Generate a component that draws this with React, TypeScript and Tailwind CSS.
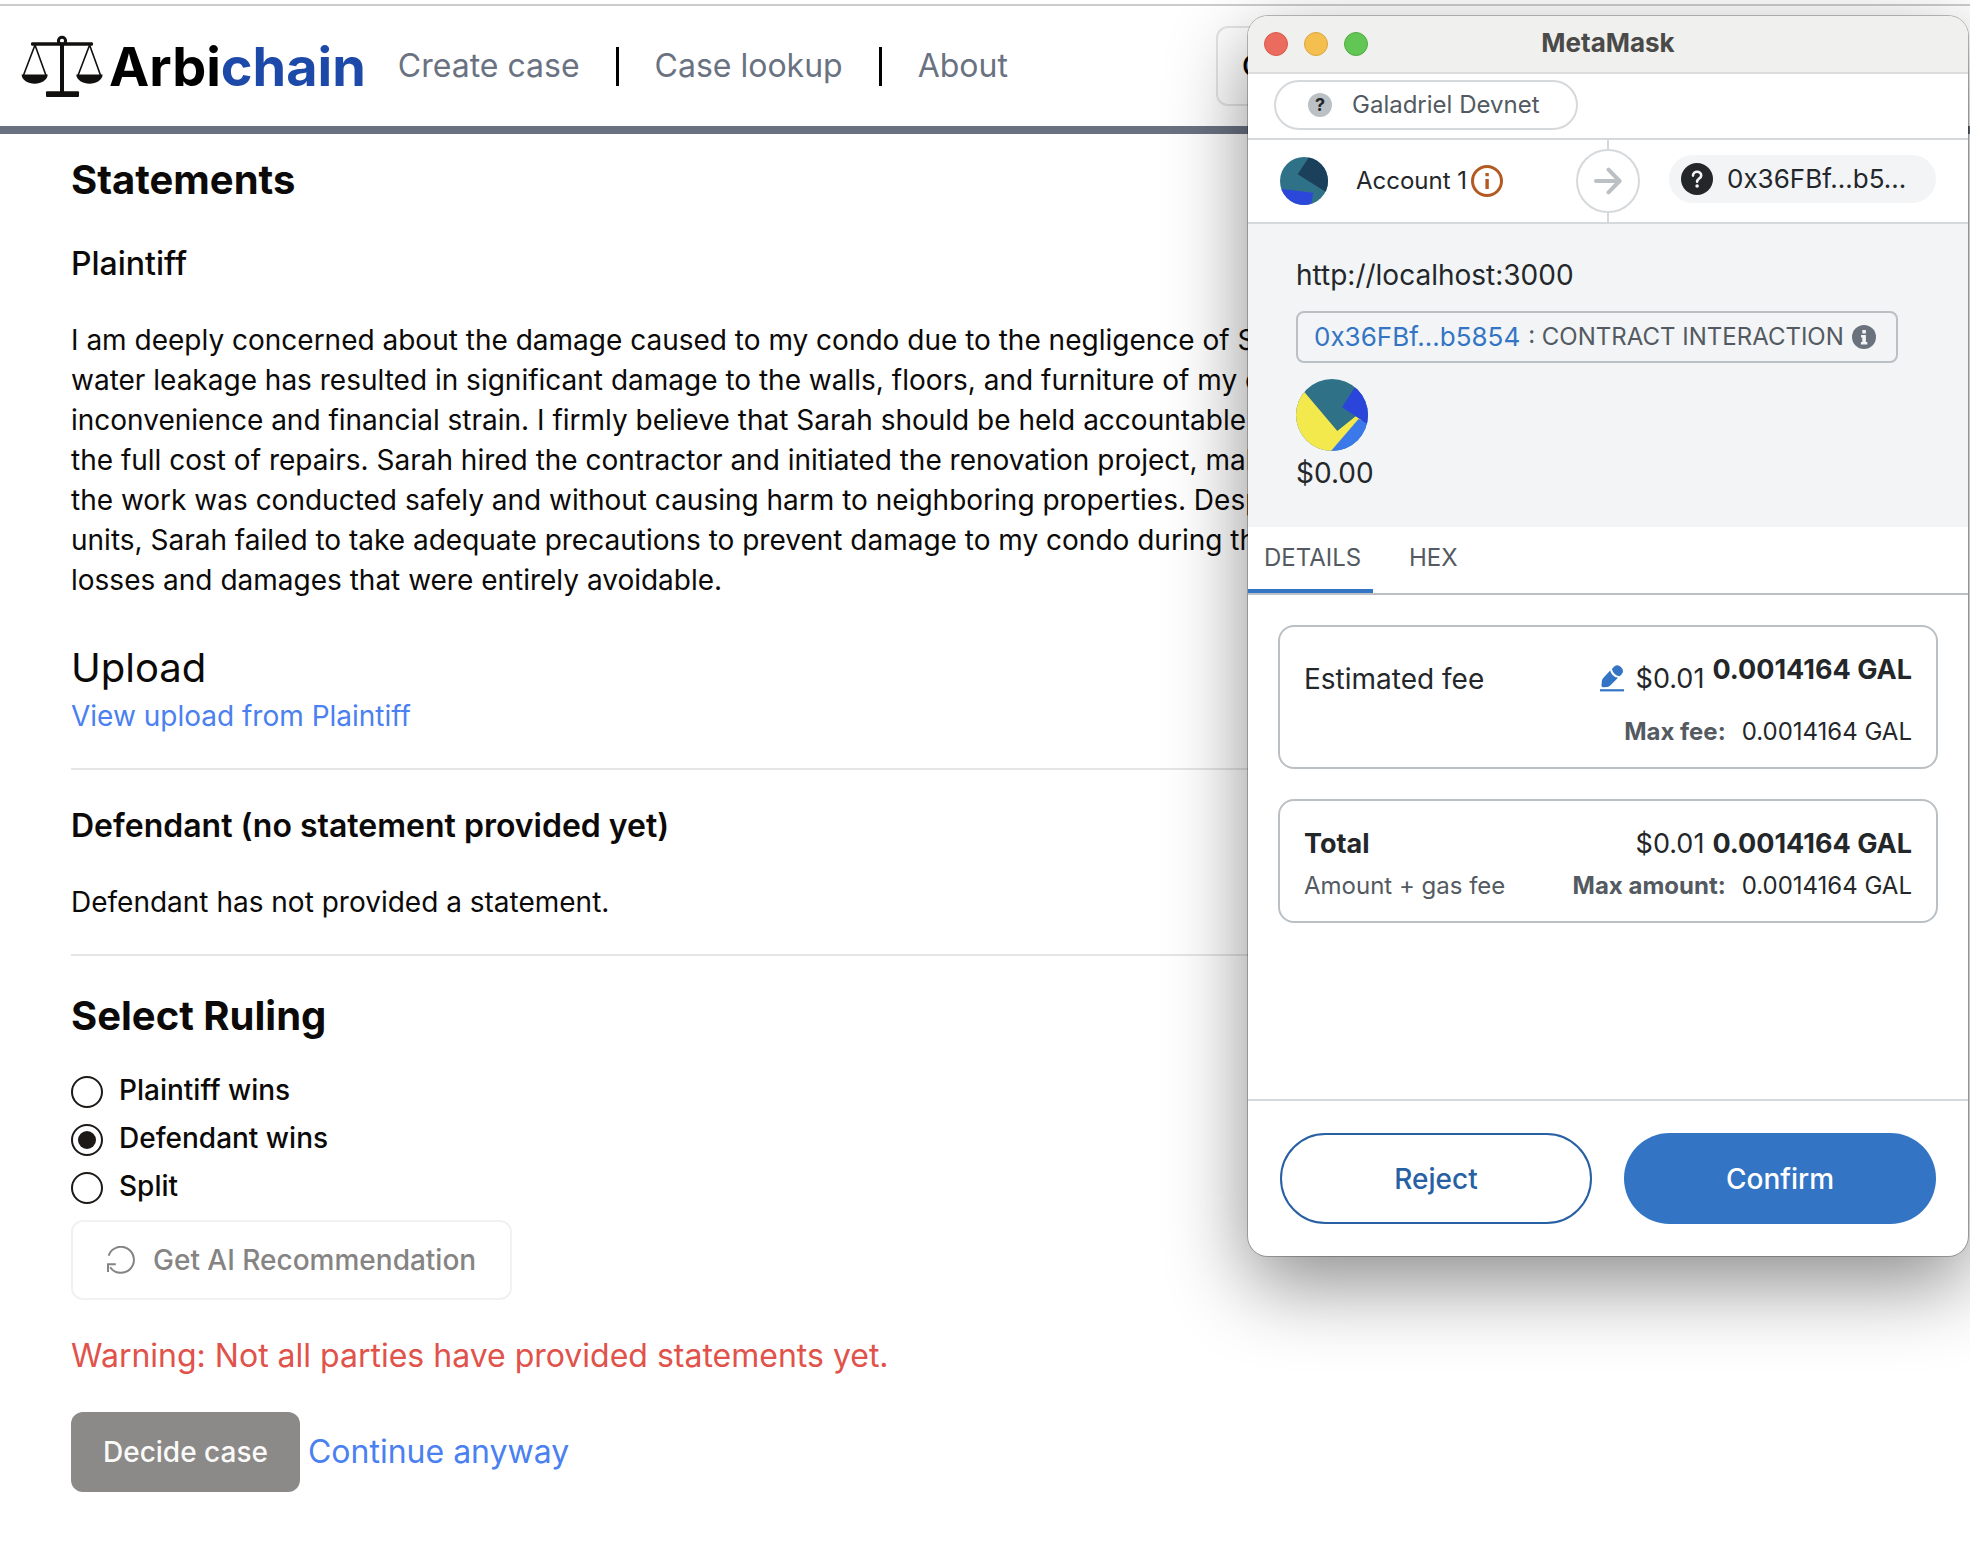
import { useState } from "react";
import type { ReactNode } from "react";

function ScalesLogo() {
  return (
    <svg className="h-[63px] w-[82px] shrink-0" viewBox="0 0 82 63" fill="#12100e" aria-hidden="true">
      <circle cx="41" cy="5.8" r="3.6" fill="none" stroke="#12100e" strokeWidth="3" />
      <rect x="10" y="7.2" width="62" height="3.6" rx="1.4" />
      <rect x="39" y="8" width="4" height="50" />
      <rect x="25" y="56.3" width="33" height="5.7" rx="1" />
      <path d="M14 10 L2.4 40.5 M14 10 L25 40.5 M68.6 10 L57 40.5 M68.6 10 L79.6 40.5" stroke="#12100e" strokeWidth="1.6" fill="none" />
      <path d="M.6 39.6 H26.7 C26.7 45 20 48.8 13.7 48.8 C7 48.8 .6 45 .6 39.6 Z" />
      <path d="M55.3 39.6 H81.6 C81.6 45 75 48.8 68.5 48.8 C62 48.8 55.3 45 55.3 39.6 Z" />
    </svg>
  );
}

function ReloadIcon() {
  return (
    <svg className="size-7" viewBox="0 0 28 28" fill="none" stroke="currentColor" strokeWidth="2" aria-hidden="true">
      <path d="M1.6 9.6 A13 13 0 1 1 3.2 21.2" />
      <path d="M1 26 V18.2 H8.8" />
    </svg>
  );
}

function AccountIdenticon() {
  return (
    <svg className="size-12 overflow-hidden rounded-full" viewBox="0 0 48 48" aria-hidden="true">
      <rect width="48" height="48" fill="#2f7288" />
      <polygon points="29,0 17.7,17.3 46,35 48,36 48,0" fill="#1a405c" />
      <polygon points="0,31.8 33.3,35.7 31,48 0,48" fill="#2b48da" />
    </svg>
  );
}

function ContractIdenticon() {
  return (
    <svg className="size-[72px] overflow-hidden rounded-full" viewBox="0 0 72 72" aria-hidden="true">
      <rect width="72" height="72" fill="#2f7288" />
      <polygon points="0,3 9,13.7 41.3,52 60,37 66,41 38,72 0,72" fill="#f3e94d" />
      <polygon points="62.5,40 35,72 72,72 72,44" fill="#3b78ea" />
      <polygon points="64,0 59,8 46,28.3 72,45.5 72,0" fill="#2b45da" />
    </svg>
  );
}

function InfoOutlineIcon() {
  return (
    <svg className="size-8" viewBox="0 0 32 32" aria-hidden="true">
      <circle cx="16" cy="16" r="14.5" fill="none" stroke="#b35a22" strokeWidth="3" />
      <rect x="14.4" y="8" width="3.4" height="3.2" fill="#b35a22" />
      <rect x="14.4" y="14" width="3.4" height="10" fill="#b35a22" />
    </svg>
  );
}

function InfoSolidIcon() {
  return (
    <svg className="size-6" viewBox="0 0 24 24" aria-hidden="true">
      <circle cx="12" cy="12" r="12" fill="#6a737d" />
      <path d="M10.3 5 h3.6 v3.4 h-3.6 z M9 10 h4.9 v7 h1.4 v2.4 h-6.4 v-2.4 h1.4 v-4.6 h-1.3 z" fill="#f2f4f6" />
    </svg>
  );
}

function QuestionIcon() {
  return (
    <svg className="size-8" viewBox="0 0 32 32" aria-hidden="true">
      <circle cx="16" cy="16" r="16" fill="#24272a" />
      <path d="M12 12.6 C12 7.6 20.2 7.6 20.2 12.4 C20.2 15.6 16.1 15.6 16.1 18.8" fill="none" stroke="#f2f4f6" strokeWidth="2.6" strokeLinecap="round" />
      <circle cx="16.1" cy="23" r="1.8" fill="#f2f4f6" />
    </svg>
  );
}

function ArrowIcon() {
  return (
    <svg className="size-7" viewBox="0 0 28 28" fill="none" stroke="#bbc0c5" strokeWidth="4" strokeLinecap="round" strokeLinejoin="round" aria-hidden="true">
      <path d="M2 14 H24" />
      <path d="M14.5 2.6 L25.6 14 L14.5 25.4" />
    </svg>
  );
}

function EditIcon() {
  return (
    <svg className="h-7 w-6" viewBox="0 0 24 28" fill="#3375c4" aria-hidden="true">
      <path d="M10.2 5.4 Q11.6 11.4 18 12.8 L10 20.8 Q8.9 21.8 7.4 21.9 L3.2 22.2 Q1.4 22.3 1.5 20.5 L1.8 16.4 Q1.9 14.6 3 13.2 Z" />
      <path d="M11.9 3.9 L14 1.8 Q17.4 -1.2 20.9 1.9 Q24.8 5.6 21.6 9.2 L19.6 11.3 Q13.4 10 11.9 3.9 Z" />
      <rect x="0" y="24.2" width="24" height="2.2" />
    </svg>
  );
}

const navLinks = ["Create case", "Case lookup", "About"];

function Header() {
  return (
    <header className="mt-1 flex items-center border-t-2 border-b-8 border-t-[#cccccc] border-b-gray-500 pr-[71px] pl-[21px]">
      <a href="#home" className="flex h-[120px] items-center gap-1.5 text-[54px] leading-[60px] font-bold text-black">
        <ScalesLogo />
        <span className="pt-0.5">
          Arbi<span className="text-[#1d4aa8]">chain</span>
        </span>
      </a>
      <nav className="ml-8 flex items-center">
        {navLinks.map((label, i) => (
          <div key={label} className="flex items-center">
            {i > 0 && <span className="mx-9 h-[39px] w-[3px] bg-black" />}
            <a href={"#" + label.toLowerCase().replace(" ", "-")} className="text-[32px] leading-10 text-gray-500">
              {label}
            </a>
          </div>
        ))}
      </nav>
      <button type="button" className="ml-52 h-20 rounded-xl border-2 border-[#e5e5e5] px-6 text-[28px] font-medium text-black">
        Connect
      </button>
    </header>
  );
}

const statementLines = [
  "I am deeply concerned about the damage caused to my condo due to the negligence of Sarah",
  "water leakage has resulted in significant damage to the walls, floors, and furniture of my condo",
  "inconvenience and financial strain. I firmly believe that Sarah should be held accountable",
  "the full cost of repairs. Sarah hired the contractor and initiated the renovation project, making",
  "the work was conducted safely and without causing harm to neighboring properties. Despite",
  "units, Sarah failed to take adequate precautions to prevent damage to my condo during the",
  "losses and damages that were entirely avoidable.",
];

const rulings = ["Plaintiff wins", "Defendant wins", "Split"];

function CasePage() {
  const [ruling, setRuling] = useState("Defendant wins");
  return (
    <main className="px-[71px] pt-[18px] pb-14 text-[28px] leading-10 text-stone-950">
      <h2 className="text-[40px] leading-14 font-bold">Statements</h2>

      <section>
        <h3 className="mt-8 text-[32px] leading-12 font-medium">Plaintiff</h3>
        <p className="mt-8 whitespace-nowrap">
          {statementLines.map((line) => (
            <span key={line} className="block">
              {line}
            </span>
          ))}
        </p>
        <h4 className="mt-10 text-[40px] leading-14">Upload</h4>
        <a href="#upload" className="block w-fit text-[#4a80f0]">
          View upload from Plaintiff
        </a>
      </section>

      <hr className="mt-8 border-t-2 border-[#e5e5e5]" />

      <section>
        <h3 className="mt-8 text-[32px] leading-12 font-semibold">Defendant (no statement provided yet)</h3>
        <p className="mt-8">Defendant has not provided a statement.</p>
      </section>

      <hr className="mt-8 border-t-2 border-[#e5e5e5]" />

      <h2 className="mt-8 text-[40px] leading-14 font-bold">Select Ruling</h2>
      <div className="mt-8 flex flex-col gap-4">
        {rulings.map((r) => (
          <label key={r} className="flex h-8 w-fit items-start gap-4 leading-7 font-medium">
            <input
              type="radio"
              name="ruling"
              checked={ruling === r}
              onChange={() => setRuling(r)}
              className="grid size-8 appearance-none place-content-center rounded-full border-2 border-stone-900 before:size-[18px] before:rounded-full checked:before:bg-stone-900"
            />
            {r}
          </label>
        ))}
      </div>
      <button
        type="button"
        className="mt-4 flex h-20 items-center gap-[18px] rounded-xl border-2 border-[#f1f1f0] px-[34px] font-medium text-[#858483]"
      >
        <ReloadIcon />
        Get AI Recommendation
      </button>
      <p className="mt-8 text-[32px] leading-12 text-[#e0524a]">Warning: Not all parties have provided statements yet.</p>
      <div className="mt-8 flex items-center gap-2">
        <button type="button" className="h-20 rounded-xl bg-[#8c8a88] px-8 font-medium text-stone-50">
          Decide case
        </button>
        <button type="button" className="text-[32px] text-[#4a80f0]">
          Continue anyway
        </button>
      </div>
    </main>
  );
}

function FeeCard({ className, children }: { className: string; children: ReactNode }) {
  return <section className={"rounded-2xl border-2 border-[#bbc0c5] px-6 " + className}>{children}</section>;
}

function WalletWindow() {
  return (
    <aside
      aria-label="MetaMask"
      className="absolute top-4 right-0.5 w-[720px] overflow-hidden rounded-[20px] bg-white text-[28px] leading-10 text-[#24272a] shadow-[0_0_0_1px_rgba(0,0,0,0.25),0_28px_80px_rgba(0,0,0,0.45)]"
    >
      <div className="grid h-[58px] grid-cols-[1fr_auto_1fr] items-center border-b-2 border-[#dcdcda] bg-[#f0f0ee] px-4">
        <div className="flex gap-4">
          <button type="button" aria-label="Close" className="size-6 rounded-full border border-[#d9584c] bg-[#ec6b5f]" />
          <button type="button" aria-label="Minimise" className="size-6 rounded-full border border-[#dba63c] bg-[#f5bf4f]" />
          <button type="button" aria-label="Zoom" className="size-6 rounded-full border border-[#52ab43] bg-[#62c655]" />
        </div>
        <h1 className="pb-0.5 text-[26px] leading-8 font-bold text-[#4a4a48]">MetaMask</h1>
      </div>

      <div className="h-[66px] border-b-2 border-[#d6d9dc] px-[26px] pt-1.5">
        <button type="button" className="flex h-[50px] items-center gap-5 rounded-full border-2 border-[#d6d9dc] pr-9 pl-8 text-2xl text-[#535a61]">
          <span className="grid size-6 place-content-center rounded-full bg-[#bbc0c5] text-lg leading-6 font-bold text-[#24272a]">?</span>
          Galadriel Devnet
        </button>
      </div>

      <div className="grid h-[84px] grid-cols-[1fr_64px_1fr] items-center border-b-2 border-[#d6d9dc] px-8">
        <div className="flex items-center">
          <AccountIdenticon />
          <span className="ml-7 text-2xl">Account 1</span>
          <span className="ml-1">
            <InfoOutlineIcon />
          </span>
        </div>
        <div className="flex h-full flex-col items-center">
          <span className="w-0.5 flex-1 bg-[#d6d9dc]" />
          <span className="grid size-16 place-content-center rounded-full border-2 border-[#d6d9dc]">
            <ArrowIcon />
          </span>
          <span className="w-0.5 flex-1 bg-[#d6d9dc]" />
        </div>
        <div className="mb-1 ml-[29px] flex h-12 items-center gap-3.5 rounded-full bg-[#f2f4f6] pl-3 text-[26px]">
          <QuestionIcon />
          0x36FBf...b5...
        </div>
      </div>

      <div className="bg-[#f2f4f6] px-12 pt-[31px] pb-[34px]">
        <p>http://localhost:3000</p>
        <div className="mt-4 flex h-[52px] w-fit items-center rounded-lg border-2 border-[#bbc0c5] pr-5 pl-4">
          <a href="#contract" className="text-[26px] text-[#3375c4]">
            0x36FBf...b5854
          </a>
          <span className="ml-2 text-2xl text-[#535a61]">: CONTRACT INTERACTION</span>
          <span className="ml-2">
            <InfoSolidIcon />
          </span>
        </div>
        <div className="mt-4">
          <ContractIdenticon />
        </div>
        <p className="pt-0.5">$0.00</p>
      </div>

      <div role="tablist" className="flex gap-5 border-b-2 border-[#bbc0c5] text-2xl text-[#535a61]">
        <button type="button" role="tab" aria-selected="true" className="h-[66px] w-[125px] border-b-4 border-[#3375c4] pl-4 text-left">
          DETAILS
        </button>
        <button type="button" role="tab" aria-selected="false" className="h-[66px] border-b-4 border-transparent px-4">
          HEX
        </button>
      </div>

      <div className="flex flex-col gap-[30px] px-[30px] pt-[30px] pb-44">
        <FeeCard className="pt-5 pb-4">
          <div className="flex h-16 items-center">
            <span className="flex-1">Estimated fee</span>
            <button type="button" aria-label="Edit fee" className="mr-3">
              <EditIcon />
            </button>
            <span className="mr-2 text-[27px]">$0.01</span>
            <b className="self-start text-[27px] leading-[46px]">0.0014164 GAL</b>
          </div>
          <div className="flex justify-end gap-4 pt-0.5 text-2xl leading-[38px]">
            <b className="text-[#535a61]">Max fee:</b>
            <span>0.0014164 GAL</span>
          </div>
        </FeeCard>
        <FeeCard className="pt-[22px] pb-3.5">
          <div className="flex leading-[42px]">
            <b className="flex-1 text-[27px]">Total</b>
            <span className="mr-2 text-[27px]">$0.01</span>
            <b className="text-[27px]">0.0014164 GAL</b>
          </div>
          <div className="flex text-2xl leading-[42px]">
            <span className="flex-1 text-[#535a61]">Amount + gas fee</span>
            <b className="mr-4 text-[#535a61]">Max amount:</b>
            <span>0.0014164 GAL</span>
          </div>
        </FeeCard>
      </div>

      <div className="grid grid-cols-2 gap-8 border-t-2 border-[#d6d9dc] px-8 py-8 font-medium">
        <button type="button" className="h-[91px] rounded-full border-2 border-[#2860a4] text-[#2860a4]">
          Reject
        </button>
        <button type="button" className="h-[91px] rounded-full bg-[#3375c4] text-white">
          Confirm
        </button>
      </div>
    </aside>
  );
}

export default function App() {
  return (
    <div className="relative flow-root min-h-screen overflow-hidden bg-white font-[Inter,sans-serif]">
      <Header />
      <CasePage />
      <WalletWindow />
    </div>
  );
}
